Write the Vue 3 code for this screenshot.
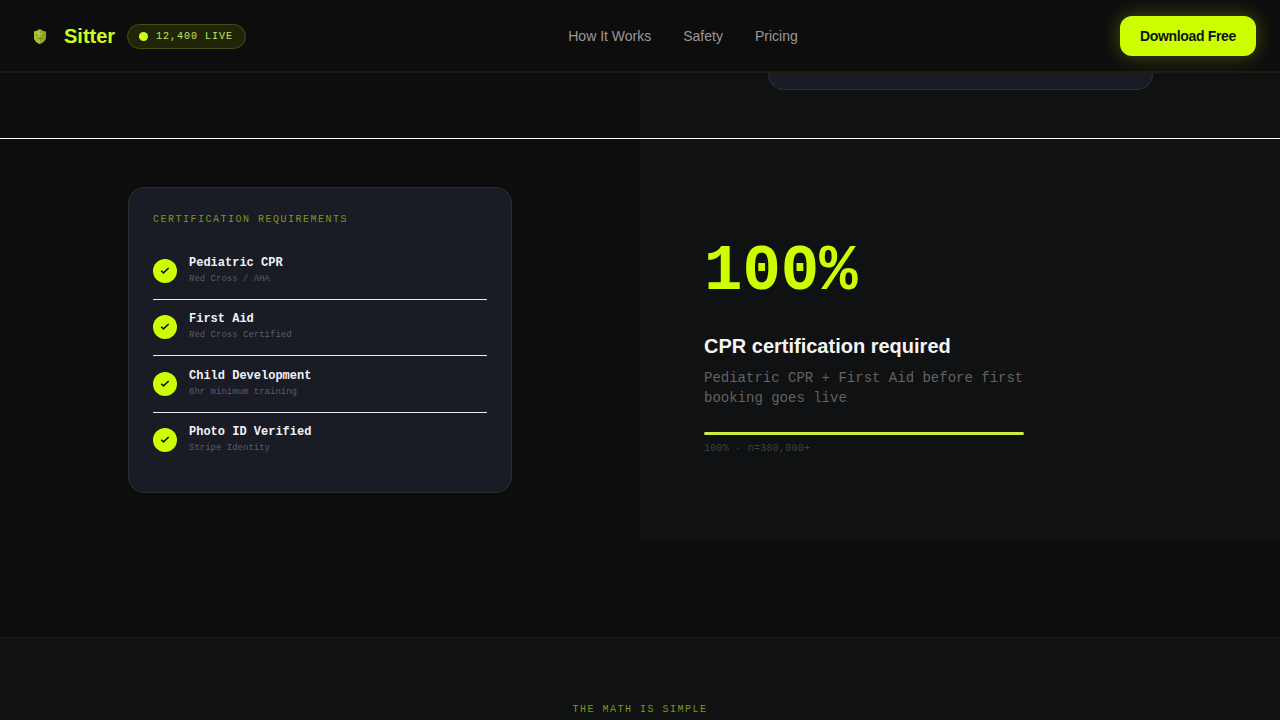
<script setup>
const links = ['How It Works', 'Safety', 'Pricing']
const requirements = [
  { title: 'Pediatric CPR', sub: 'Red Cross / AHA' },
  { title: 'First Aid', sub: 'Red Cross Certified' },
  { title: 'Child Development', sub: '6hr minimum training' },
  { title: 'Photo ID Verified', sub: 'Stripe Identity' },
]
</script>

<template>
  <div class="page">
    <header class="nav">
      <div class="brand">
        <svg class="shield" viewBox="0 0 32 32" width="32" height="32">
          <path d="M16 9 C18 10.5 20 11.2 22 11.5 V17 C22 20.5 19 23 16 24 C13 23 10 20.5 10 17 V11.5 C12 11.2 14 10.5 16 9Z" fill="#93aa20" />
          <path d="M16 9 V24 C13 23 10 20.5 10 17 V11.5 C12 11.2 14 10.5 16 9Z" fill="#a8c033" />
          <path d="M11.5 15.2 H14 M18 15.2 H20.5 M13 18 C15 19 17 19 19 17.5" fill="none" stroke="#6b7f1c" stroke-width="1" />
          <path d="M14.2 13 V16 M17.4 13 V16" stroke="#c8d77d" stroke-width=".8" />
        </svg>
        <span class="name">Sitter</span>
        <span class="live"><i class="dot"></i>12,400 LIVE</span>
      </div>
      <nav class="links"><a v-for="link in links" :key="link">{{ link }}</a></nav>
      <button class="download">Download Free</button>
    </header>

    <section class="previous">
      <div></div>
      <div class="panel previous-panel"><div class="previous-card"></div></div>
    </section>

    <section class="feature">
      <div class="half">
        <div class="card">
          <div class="eyebrow">CERTIFICATION REQUIREMENTS</div>
          <div v-for="item in requirements" :key="item.title" class="row">
            <span class="check">
              <svg viewBox="0 0 12 12" width="12" height="12"><path d="M2.2 5.8 L4.5 7.9 L9.7 3" fill="none" stroke="#101408" stroke-width="1.5" /></svg>
            </span>
            <div class="copy">
              <div class="title">{{ item.title }}</div>
              <div class="sub">{{ item.sub }}</div>
            </div>
          </div>
        </div>
      </div>
      <div class="half panel stat">
        <div class="number">100%</div>
        <h2>CPR certification required</h2>
        <p>Pediatric CPR + First Aid before first booking goes live</p>
        <div class="bar"></div>
        <div class="note">100% · n=380,000+</div>
      </div>
    </section>

    <section class="math"><div class="eyebrow">THE MATH IS SIMPLE</div></section>
  </div>
</template>

<style>
html, body { margin: 0; background: #0d0d0d; overflow: hidden; }
</style>

<style scoped>
* { box-sizing: border-box; }
.page { width: 1280px; height: 720px; overflow: hidden; background: #0d0d0d; font-family: "Liberation Sans", Arial, sans-serif; }
.nav { position: relative; z-index: 1; height: 73px; padding: 0 24px; display: flex; justify-content: space-between; align-items: center; background: #0d0d0d; border-bottom: 2px solid #1b1d0d; }
.brand { display: flex; align-items: center; }
.shield { margin-right: 8px; }
.name { color: #ccff1a; font-size: 20px; line-height: 28px; font-weight: 700; width: 51px; margin-right: 12px; }
.live { display: flex; align-items: center; height: 25px; width: 119px; margin-top: 2px; padding-left: 11px; border: 1px solid #454f17; border-radius: 13px; background: #202508; color: #c5e65b; font: 10px/15px "Liberation Mono", monospace; letter-spacing: 1px; white-space: nowrap; }
.dot { width: 9px; height: 9px; margin-right: 8px; border-radius: 50%; background: #ccff1a; }
.links { display: flex; gap: 32px; color: #999; font-size: 14px; line-height: 20px; }
.download { width: 136px; height: 40px; padding: 0; border: 0; border-radius: 12px; background: #ccff00; color: #0d160c; font: 700 14px/20px "Liberation Sans", Arial, sans-serif; letter-spacing: -.35px; box-shadow: 0 0 20px rgba(204, 255, 0, .3); }
.previous { height: 65px; display: grid; grid-template-columns: 1fr 1fr; }
.panel { background: #0f1112; }
.previous-panel { display: flex; justify-content: center; }
.previous-card { width: 385px; height: 17px; background: #191b25; border: 1px solid #2c302e; border-top: 0; border-radius: 0 0 16px 16px; }
.feature { height: 404px; border-top: 1px solid #fff; display: grid; grid-template-columns: 1fr 1fr; }
.half { display: flex; align-items: flex-start; padding-top: 48px; justify-content: center; }
.card { width: 384px; height: 306px; padding: 24px; border: 1px solid #292e2b; border-radius: 16px; background: #191b25; }
.eyebrow { color: #7d981b; font: 10px/15px "Liberation Mono", monospace; letter-spacing: 1.5px; }
.card .eyebrow { margin-bottom: 16.6px; }
.row { height: 56.4px; display: flex; align-items: center; gap: 12px; border-bottom: 1px solid #e8eaf0; }
.row:last-child { border-bottom-color: transparent; }
.check { display: grid; place-items: center; width: 24px; height: 24px; margin-bottom: .8px; border-radius: 50%; background: #ccff00; }
.copy { padding-bottom: 2px; }
.title { color: #f2f3f7; font: 700 12px/16px "Liberation Mono", monospace; }
.sub { color: #5c5d65; font: 9px/14px "Liberation Mono", monospace; margin-top: 1px; }
.stat { flex-direction: column; justify-content: flex-start; padding: 101px 0 0 64px; }
.number { color: #ccff00; font: 700 64px/64px "Liberation Mono", monospace; margin-bottom: 28px; }
h2 { margin: 0 0 8px; color: #f5f5f5; font-size: 20px; line-height: 28px; font-weight: 700; }
p { margin: 0; width: 320px; color: #626364; font: 14px/20px "Liberation Mono", monospace; }
.bar { margin-top: 24px; width: 320px; height: 3px; border-radius: 2px; background: #cbed42; }
.note { margin-top: 7px; color: #414344; font: 10px/14px "Liberation Mono", monospace; letter-spacing: .25px; }
.math { margin-top: 95px; height: 84px; padding-top: 64px; border-top: 1px solid #1b1c1b; background: #0f1112; text-align: center; }
</style>
